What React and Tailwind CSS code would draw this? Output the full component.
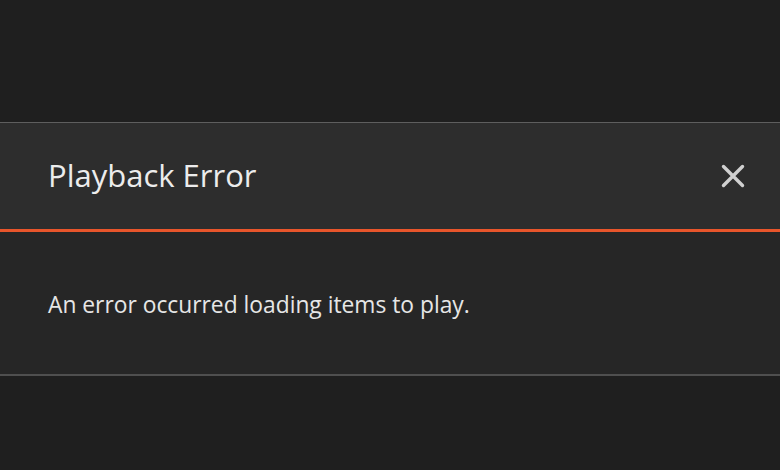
export default function App() {
  return (
    <div className="w-[780px] h-[470px] bg-[#1f1f1f] flex flex-col overflow-hidden" style={{ fontFamily: '"Open Sans", "Noto Sans", sans-serif' }}>
      <div className="h-[122px] shrink-0" />
      <div className="border-t border-[#5e5e5e] bg-[#2d2d2d] h-[107px] shrink-0 flex items-center justify-between pl-[48px] pr-[35px]">
        <h1 className="text-[31px] text-[#ececec] leading-none pb-[2px]">Playback Error</h1>
        <svg width="24" height="24" viewBox="0 0 24 24" className="text-[#d0d0d0]">
          <path d="M2.5 2.5 L21.5 21.5 M21.5 2.5 L2.5 21.5" stroke="currentColor" strokeWidth="3.4" strokeLinecap="round" />
        </svg>
      </div>
      <div className="h-[3px] bg-[#e8552b] shrink-0" />
      <div className="bg-[#262626] h-[144px] shrink-0 border-b-2 border-[#4f4f4f] pl-[48px] pt-[62px]">
        <p className="text-[22.8px] text-[#e6e6e6] leading-none">An error occurred loading items to play.</p>
      </div>
      <div className="flex-1" />
    </div>
  );
}
